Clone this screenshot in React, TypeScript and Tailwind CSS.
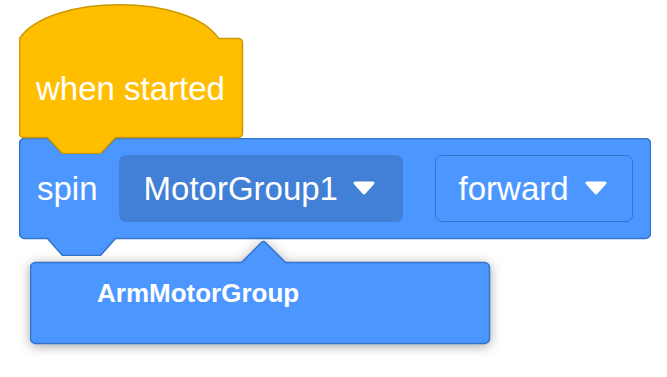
import React from "react";

function Caret() {
  return (
    <svg width="22" height="14" viewBox="0 0 22 14" className="shrink-0">
      <path d="M2,2 H20 L11,12 Z" fill="#ffffff" stroke="#ffffff" strokeWidth={3} strokeLinejoin="round" />
    </svg>
  );
}

export default function App() {
  return (
    <main className="relative h-[377px] w-[667px] overflow-hidden bg-white font-['Liberation_Sans',Arial,sans-serif] text-white">
      {/* spin block */}
      <div className="absolute left-[19px] top-[138px] h-[118px] w-[632px]">
        <svg className="absolute inset-0" width="632" height="118" viewBox="-0.5 -0.5 632 118">
          <path
            d="M5,0 H28 L43,15 H81 L96,0 H626 A5,5 0 0 1 631,5 V95 A5,5 0 0 1 626,100 H96 L81,117 H43 L28,100 H5 A5,5 0 0 1 0,95 V5 A5,5 0 0 1 5,0 Z"
            fill="#4c97ff"
            stroke="#3373cc"
            strokeWidth={1.5}
            strokeLinejoin="round"
          />
        </svg>
        <div className="relative flex h-[100px] items-center pl-[18px]">
          <span className="text-[33px] leading-none">spin</span>
          <div className="ml-[21px] flex h-[67px] w-[284px] items-center rounded-[7px] bg-[#4280d7] pl-[25px]">
            <span className="text-[33px] leading-none">MotorGroup1</span>
            <span className="ml-[15px]">
              <Caret />
            </span>
          </div>
          <div className="ml-[32px] flex h-[67px] w-[198px] items-center rounded-[7px] border-[1.5px] border-[#3373cc] bg-[#4c97ff] pl-[23px]">
            <span className="text-[33px] leading-none">forward</span>
            <span className="ml-[16px]">
              <Caret />
            </span>
          </div>
        </div>
      </div>

      {/* hat block */}
      <div className="absolute left-[19px] top-[4px] h-[150px] w-[225px]">
        <svg className="absolute inset-0" width="225" height="150" viewBox="-0.5 -0.5 225 150">
          <path
            d="M0,34 C30,-11 170,-11 199,34 H219 A4,4 0 0 1 223,38 V129 A4,4 0 0 1 219,133 H96 L81,149 H43 L28,133 H4 A4,4 0 0 1 0,129 Z"
            fill="#ffbf00"
            stroke="#cc9900"
            strokeWidth={1.5}
            strokeLinejoin="round"
          />
        </svg>
        <div className="relative flex h-[133px] items-center pl-[17px] pt-[36px]">
          <span className="text-[33px] leading-none">when started</span>
        </div>
      </div>

      {/* dropdown menu */}
      <div className="absolute left-[30px] top-[240px] h-[106px] w-[462px]">
        <svg
          className="absolute inset-0 drop-shadow-[0_2px_6px_rgba(0,0,0,0.35)]"
          width="462"
          height="106"
          viewBox="-0.5 -0.5 462 106"
        >
          <path
            d="M5,22 H211 L231,2 Q233,0 235,2 L255,22 H454 A5,5 0 0 1 459,27 V98 A5,5 0 0 1 454,103 H5 A5,5 0 0 1 0,98 V27 A5,5 0 0 1 5,22 Z"
            fill="#4c97ff"
            stroke="#3373cc"
            strokeWidth={1.5}
            strokeLinejoin="round"
          />
        </svg>
        <div className="relative flex flex-col pl-[67px] pt-[40px]">
          <span className="text-[26px] font-bold leading-none">ArmMotorGroup</span>
        </div>
      </div>
    </main>
  );
}
